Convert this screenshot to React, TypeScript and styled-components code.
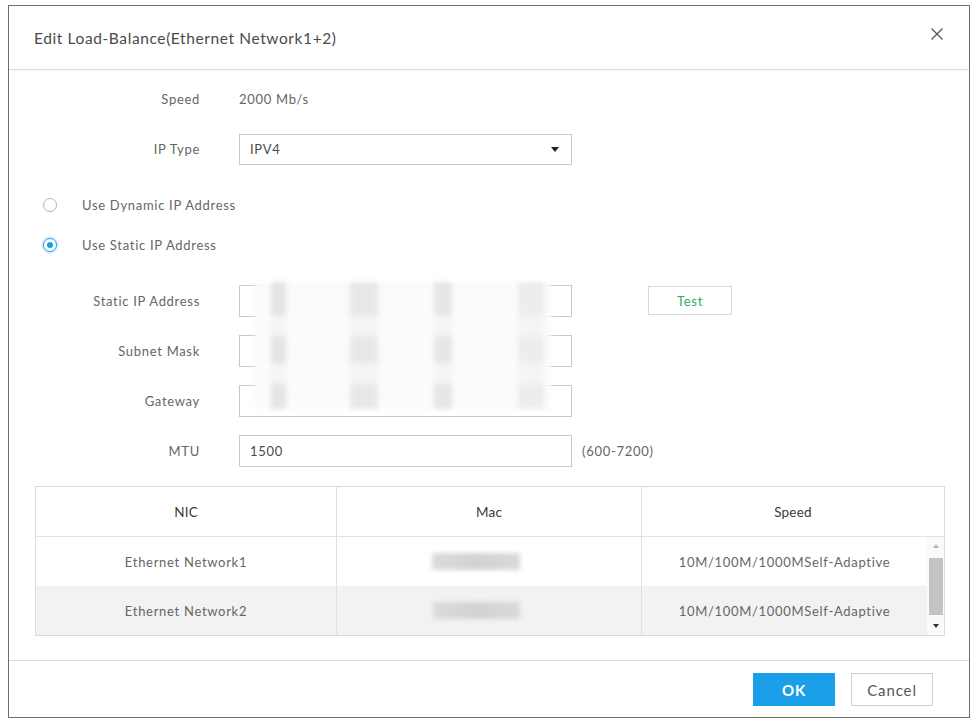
import React from "react";
import styled, { createGlobalStyle } from "styled-components";

const GlobalStyle = createGlobalStyle`
  html, body {
    margin: 0;
    padding: 0;
    background: #ffffff;
    font-family: Lato, "Liberation Sans", Arial, sans-serif;
  }
`;

const Page = styled.div`
  padding: 5px 3px 0 8px;
`;

const Dialog = styled.div`
  width: 960px;
  height: 711px;
  border: 1px solid #6f6f6f;
  display: flex;
  flex-direction: column;
  background: #fff;
`;

const Header = styled.div`
  height: 63px;
  border-bottom: 1px solid #dcdcdc;
  display: flex;
  align-items: center;
  justify-content: space-between;
  padding: 0 25px 0 25px;
  box-shadow: 0 1px 2px rgba(0, 0, 0, 0.04);
`;

const Title = styled.div`
  font-size: 15.5px;
  color: #4a4a4a;
  letter-spacing: 0.6px;
`;

const Close = styled.button`
  border: 0;
  background: none;
  padding: 0;
  width: 14px;
  height: 14px;
  margin-top: -8px;
  display: flex;
`;

const Body = styled.div`
  padding: 13px 24px 24px 26px;
  display: flex;
  flex-direction: column;
  gap: 18px;
  border-bottom: 1px solid #dcdcdc;
`;

const Row = styled.div`
  display: flex;
  align-items: center;
  height: 32px;
`;

const Text = styled.div`
  font-size: 13px;
  letter-spacing: 0.7px;
  color: #666;
`;

const Label = styled(Text)`
  width: 165px;
  text-align: right;
  margin-right: 39px;
  white-space: nowrap;
`;

const Input = styled.div<{ $h?: number }>`
  width: 333px;
  height: ${(p) => p.$h ?? 30}px;
  border: 1px solid #c8c8c8;
  display: flex;
  align-items: center;
  padding: 0 10px;
  box-sizing: border-box;
  font-size: 13px;
  letter-spacing: 0.7px;
  color: #4a4a4a;
  justify-content: space-between;
`;

const Caret = styled.span`
  width: 0;
  height: 0;
  border-left: 4.5px solid transparent;
  border-right: 4.5px solid transparent;
  border-top: 5px solid #222;
  margin-right: 2px;
`;

const RadioGroup = styled.div`
  display: flex;
  flex-direction: column;
  gap: 20px;
  margin: 12px 0;
`;

const RadioRow = styled(Text)`
  display: flex;
  align-items: center;
  height: 20px;
  padding-left: 8px;
`;

const Radio = styled.span<{ $on?: boolean }>`
  width: 12px;
  height: 12px;
  border-radius: 50%;
  border: 1px solid ${(p) => (p.$on ? "#1a9be6" : "#b5b5b5")};
  box-shadow: ${(p) => (p.$on ? "0 0 0 2px rgba(26,155,230,0.16)" : "none")};
  display: flex;
  align-items: center;
  justify-content: center;
  margin-right: 25px;
  &::after {
    content: "";
    width: 6px;
    height: 6px;
    border-radius: 50%;
    background: ${(p) => (p.$on ? "#1a9be6" : "transparent")};
  }
`;

const IpGroup = styled.div`
  position: relative;
  display: flex;
  flex-direction: column;
  gap: 18px;
`;

const Redaction = styled.div`
  position: absolute;
  left: 220px;
  top: -3px;
  width: 296px;
  height: 127px;
  background: #fbfbfb;
  display: flex;
  filter: blur(2.5px);
  padding-left: 16px;
  box-sizing: border-box;
`;

const Blob = styled.div<{ $w: number; $ml: number; $c: string }>`
  width: ${(p) => p.$w}px;
  margin-left: ${(p) => p.$ml}px;
  background: linear-gradient(
    to bottom,
    ${(p) => p.$c} 0 25%,
    #f5f5f5 28% 40%,
    ${(p) => p.$c} 45% 62%,
    #f5f5f5 66% 78%,
    ${(p) => p.$c} 82% 100%
  );
`;

const TestButton = styled.button`
  margin-left: 76px;
  width: 84px;
  height: 29px;
  border: 1px solid #d9d9d9;
  background: #fff;
  color: #2fae5a;
  font-family: inherit;
  font-size: 13px;
  letter-spacing: 0.7px;
  align-self: flex-start;
  margin-top: 1px;
`;

const Hint = styled(Text)`
  margin-left: 10px;
`;

const Table = styled.div`
  border: 1px solid #dadada;
  margin-top: 1px;
`;

const HeadRow = styled.div`
  display: grid;
  grid-template-columns: 300px 305px 1fr;
  height: 49px;
  border-bottom: 1px solid #e2e2e2;
`;

const Cell = styled(Text)<{ $line?: boolean }>`
  display: flex;
  align-items: center;
  justify-content: center;
  border-left: ${(p) => (p.$line ? "1px solid #e0e0e0" : "none")};
`;

const HeadCell = styled(Cell)`
  font-size: 13.5px;
  letter-spacing: 0.2px;
  color: #3a3a3a;
`;

const TableBody = styled.div`
  display: flex;
`;

const Rows = styled.div`
  flex: 1;
`;

const DataRow = styled.div<{ $alt?: boolean }>`
  display: grid;
  grid-template-columns: 300px 305px 1fr;
  height: 49px;
  background: ${(p) => (p.$alt ? "#f2f2f2" : "#fff")};
`;

const MacBlur = styled.div<{ $w: number }>`
  width: ${(p) => p.$w}px;
  height: 17px;
  margin-right: 26px;
  background: linear-gradient(to right, #dcdcdc, #d2d2d2 50%, #dadada);
  filter: blur(2px);
`;

const Scrollbar = styled.div`
  width: 17px;
  display: flex;
  flex-direction: column;
  align-items: center;
  background: #fafafa;
`;

const Arrow = styled.span<{ $up?: boolean; $c: string }>`
  width: 0;
  height: 0;
  border-left: 3.5px solid transparent;
  border-right: 3.5px solid transparent;
  ${(p) => (p.$up ? `border-bottom: 4px solid ${p.$c};` : `border-top: 4px solid ${p.$c};`)}
  margin: 7px 0;
`;

const Thumb = styled.div`
  width: 14px;
  flex: 1;
  background: #c3c3c3;
  margin: 3px 0 2px;
`;

const Footer = styled.div`
  flex: 1;
  display: flex;
  justify-content: flex-end;
  align-items: flex-start;
  gap: 16px;
  padding: 12px 36px 0 0;
`;

const Button = styled.button<{ $primary?: boolean }>`
  width: 82px;
  height: 33px;
  font-family: inherit;
  font-size: 15px;
  letter-spacing: 0.9px;
  font-weight: ${(p) => (p.$primary ? 700 : 400)};
  color: ${(p) => (p.$primary ? "#fff" : "#555")};
  background: ${(p) => (p.$primary ? "#1a9fe8" : "#fff")};
  border: 1px solid ${(p) => (p.$primary ? "#1a9fe8" : "#cfcfcf")};
`;

const nics = [
  { name: "Ethernet Network1", mac: 88 },
  { name: "Ethernet Network2", mac: 87 },
];

export default function App() {
  return (
    <>
      <GlobalStyle />
      <Page>
        <Dialog>
          <Header>
            <Title>Edit Load-Balance(Ethernet Network1+2)</Title>
            <Close aria-label="close">
              <svg width="14" height="14" viewBox="0 0 14 14">
                <path d="M1.5 1.5 L12.5 12.5 M12.5 1.5 L1.5 12.5" stroke="#555" strokeWidth="1.3" />
              </svg>
            </Close>
          </Header>
          <Body>
            <Row>
              <Label>Speed</Label>
              <Text>2000 Mb/s</Text>
            </Row>
            <Row>
              <Label>IP Type</Label>
              <Input $h={31}>
                IPV4
                <Caret />
              </Input>
            </Row>
            <RadioGroup>
              <RadioRow>
                <Radio />
                Use Dynamic IP Address
              </RadioRow>
              <RadioRow>
                <Radio $on />
                Use Static IP Address
              </RadioRow>
            </RadioGroup>
            <IpGroup>
              <Row>
                <Label>Static IP Address</Label>
                <Input $h={32} />
                <TestButton>Test</TestButton>
              </Row>
              <Row>
                <Label>Subnet Mask</Label>
                <Input $h={32} />
              </Row>
              <Row>
                <Label>Gateway</Label>
                <Input $h={32} />
              </Row>
              <Redaction>
                <Blob $w={15} $ml={0} $c="#e4e4e4" />
                <Blob $w={28} $ml={64} $c="#e8e8e8" />
                <Blob $w={18} $ml={56} $c="#e6e6e6" />
                <Blob $w={26} $ml={66} $c="#ededed" />
              </Redaction>
            </IpGroup>
            <Row>
              <Label>MTU</Label>
              <Input $h={32}>1500</Input>
              <Hint>(600-7200)</Hint>
            </Row>
            <Table>
              <HeadRow>
                <HeadCell>NIC</HeadCell>
                <HeadCell $line>Mac</HeadCell>
                <HeadCell $line>Speed</HeadCell>
              </HeadRow>
              <TableBody>
                <Rows>
                  {nics.map((n, i) => (
                    <DataRow key={n.name} $alt={i === 1}>
                      <Cell>{n.name}</Cell>
                      <Cell $line>
                        <MacBlur $w={n.mac} />
                      </Cell>
                      <Cell $line>10M/100M/1000MSelf-Adaptive</Cell>
                    </DataRow>
                  ))}
                </Rows>
                <Scrollbar>
                  <Arrow $up $c="#b8b8b8" />
                  <Thumb />
                  <Arrow $c="#333" />
                </Scrollbar>
              </TableBody>
            </Table>
          </Body>
          <Footer>
            <Button $primary>OK</Button>
            <Button>Cancel</Button>
          </Footer>
        </Dialog>
      </Page>
    </>
  );
}
